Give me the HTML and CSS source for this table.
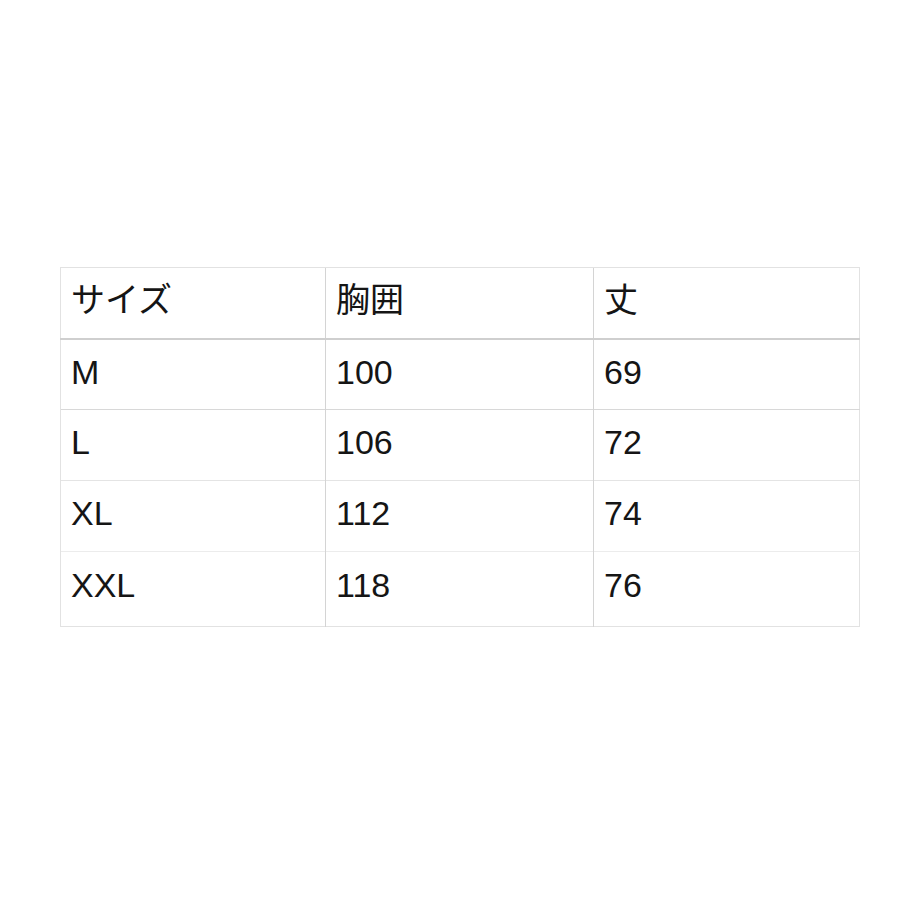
FILE: index.html
```html
<!DOCTYPE html>
<html lang="ja">
<head>
<meta charset="utf-8">
<link rel="stylesheet" href="styles.css">
</head>
<body>
<div class="page">
<table class="size-table">
  <tr class="head"><td>サイズ</td><td>胸囲</td><td>丈</td></tr>
  <tr class="r1"><td>M</td><td>100</td><td>69</td></tr>
  <tr class="r2"><td>L</td><td>106</td><td>72</td></tr>
  <tr class="r3"><td>XL</td><td>112</td><td>74</td></tr>
  <tr class="r4"><td>XXL</td><td>118</td><td>76</td></tr>
</table>
</div>
</body>
</html>
```
FILE: styles.css
```css
html, body { margin: 0; padding: 0; background: #fff; }
.page { width: 920px; height: 920px; padding: 267px 0 0 60px; box-sizing: border-box; }
.size-table {
  border-collapse: collapse;
  width: 800px;
  table-layout: fixed;
  font-family: "Liberation Sans", "Noto Sans CJK JP", sans-serif;
  font-size: 34px;
  color: #151515;
  border: 1px solid #e2e2e2;
}
.size-table td {
  padding: 0 0 6px 10px;
  border-left: 1px solid #d4d4d4;
  border-top: 1px solid #dcdcdc;
  vertical-align: middle;
  line-height: 1;
}
.size-table td:first-child { width: 254px; border-left: 1px solid #e2e2e2; }
.size-table td:nth-child(2) { width: 257px; }
.head td { height: 64px; border-top: 1px solid #e2e2e2; }
.r1 td { height: 63px; border-top: 2px solid #cfcfcf; }
.r2 td { height: 64px; border-top: 1px solid #d8d8d8; }
.r3 td { height: 64px; border-top: 1px solid #e4e4e4; }
.r4 td { height: 66px; border-top: 1px solid #ececec; padding-bottom: 8px; }
```
